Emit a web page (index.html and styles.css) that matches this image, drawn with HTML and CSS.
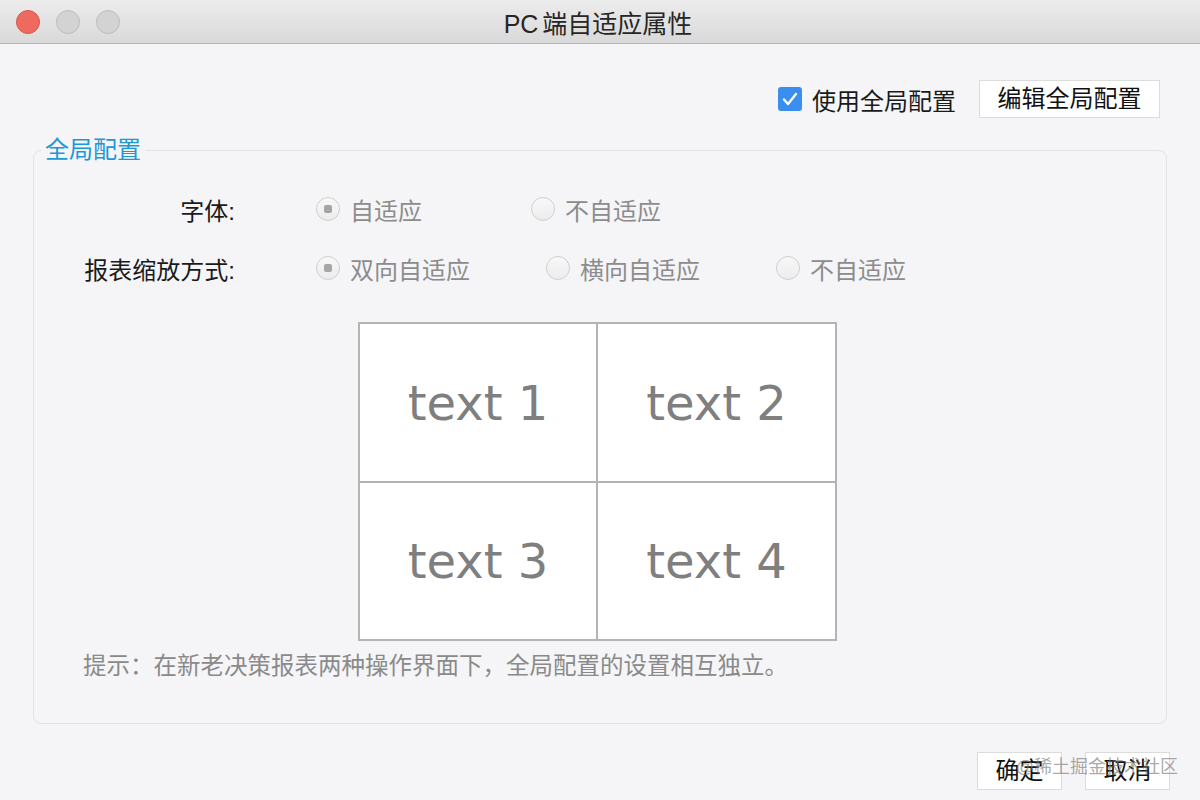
FILE: index.html
```html
<!DOCTYPE html>
<html lang="zh-CN">
<head>
  <meta charset="UTF-8">
  <meta name="viewport" content="width=device-width, initial-scale=1.0">
  <title>PC端自适应属性</title>
  <link rel="stylesheet" href="styles.css">
</head>
<body>
  <div class="window">
    <div class="titlebar">
      <div class="lights">
        <span class="light light-close"></span>
        <span class="light"></span>
        <span class="light"></span>
      </div>
      <div class="title">PC 端自适应属性</div>
    </div>

    <div class="content">
      <div class="top-row">
        <label class="check">
          <span class="checkbox">
            <svg width="24" height="24" viewBox="0 0 24 24">
              <path d="M6 12.5 L10 17 L18 7" fill="none" stroke="#fff" stroke-width="2.4" stroke-linecap="round" stroke-linejoin="round"/>
            </svg>
          </span>
          <span>使用全局配置</span>
        </label>
        <button class="btn btn-wide">编辑全局配置</button>
      </div>

      <fieldset class="group">
        <legend>全局配置</legend>

        <div class="form-row">
          <div class="form-label">字体:</div>
          <div class="option option-a"><span class="radio on"></span>自适应</div>
          <div class="option"><span class="radio"></span>不自适应</div>
        </div>

        <div class="form-row form-row-2">
          <div class="form-label">报表缩放方式:</div>
          <div class="option option-b"><span class="radio on"></span>双向自适应</div>
          <div class="option option-b"><span class="radio"></span>横向自适应</div>
          <div class="option"><span class="radio"></span>不自适应</div>
        </div>

        <div class="preview">
          <div class="cell">text 1</div>
          <div class="cell">text 2</div>
          <div class="cell">text 3</div>
          <div class="cell">text 4</div>
        </div>

        <p class="tip">提示：在新老决策报表两种操作界面下，全局配置的设置相互独立。</p>
      </fieldset>

      <div class="bottom-row">
        <button class="btn btn-small">确定</button>
        <button class="btn btn-small">取消</button>
      </div>
    </div>

    <div class="watermark">@稀土掘金技术社区</div>
  </div>
</body>
</html>
```

FILE: styles.css
```css
body {
  margin: 0;
  padding: 0;
  font-family: "Liberation Sans", "Noto Sans CJK SC", sans-serif;
  background-color: #f5f5f7;
  color: #1a1a1a;
}

.window {
  position: relative;
  width: 1200px;
  height: 800px;
  overflow: hidden;
}

.titlebar {
  position: relative;
  height: 43px;
  background: linear-gradient(#ececec, #d9d9d9);
  border-bottom: 1px solid #b4b4b4;
  display: flex;
  align-items: center;
  justify-content: center;
}

.lights {
  position: absolute;
  left: 16px;
  top: 10px;
  display: flex;
  gap: 16px;
}

.light {
  width: 22px;
  height: 22px;
  border-radius: 50%;
  background-color: #d3d3d3;
  border: 1px solid #bdbdbd;
}

.light-close {
  background-color: #ee6a5f;
  border-color: #d9564b;
}

.title {
  font-size: 25px;
  color: #262626;
  word-spacing: -3px;
  margin-right: 4px;
}

.content {
  padding: 36px 30px 0 33px;
}

.top-row {
  display: flex;
  justify-content: flex-end;
  align-items: center;
  padding-right: 10px;
  gap: 21px;
}

.check {
  display: flex;
  align-items: center;
  gap: 10px;
  font-size: 24px;
  margin-right: 2px;
}

.checkbox {
  width: 24px;
  height: 24px;
  border-radius: 3px;
  background-color: #3a8ef0;
  display: flex;
}

.btn {
  font-family: "Liberation Sans", "Noto Sans CJK SC", sans-serif;
  font-size: 24px;
  color: #111;
  background-color: #fff;
  border: 1px solid #dcdcdc;
  border-radius: 0;
  height: 38px;
  padding: 0;
  line-height: 36px;
}

.btn-wide {
  width: 181px;
}

.btn-small {
  width: 85px;
}

.group {
  margin: 0;
  margin-top: 17px;
  margin-right: 3px;
  padding: 0 0 42px 0;
  border: 1px solid #e2e2e5;
  border-radius: 8px;
}

.group legend {
  margin-left: 7px;
  padding: 0 4px;
  font-size: 24px;
  line-height: 30px;
  color: #1b98d6;
}

.form-row {
  display: flex;
  align-items: center;
  height: 36px;
  margin-top: 26px;
  font-size: 24px;
}

.form-row-2 {
  margin-top: 23px;
}

.form-label {
  width: 201px;
  text-align: right;
  margin-right: 81px;
  color: #1a1a1a;
}

.option {
  display: flex;
  align-items: center;
  gap: 10px;
  color: #8c8c8c;
}

.option-a {
  width: 215px;
}

.option-b {
  width: 230px;
}

.radio {
  width: 22px;
  height: 22px;
  border-radius: 50%;
  border: 1px solid #cfcfcf;
  background: linear-gradient(#f8f8f8, #ececec);
  display: flex;
  align-items: center;
  justify-content: center;
}

.radio.on::after {
  content: "";
  width: 8px;
  height: 8px;
  border-radius: 2px;
  background-color: #a5a5a5;
}

.preview {
  display: grid;
  grid-template-columns: 236px 237px;
  grid-template-rows: 157px 156px;
  gap: 2px;
  padding: 2px;
  width: max-content;
  background-color: #b4b4b4;
  margin: 36px 0 0 324px;
}

.cell {
  background-color: #fff;
  display: flex;
  align-items: center;
  justify-content: center;
  font-family: "DejaVu Sans", sans-serif;
  font-size: 48px;
  color: #7f7f7f;
}

.tip {
  margin: 10px 0 0 49px;
  font-size: 23.5px;
  line-height: 30px;
  color: #8a8a8a;
}

.bottom-row {
  display: flex;
  justify-content: flex-end;
  gap: 23px;
  margin-top: 28px;
}

.watermark {
  position: absolute;
  right: 22px;
  top: 755px;
  font-size: 18px;
  line-height: 24px;
  color: rgba(120, 120, 120, 0.65);
}
```
